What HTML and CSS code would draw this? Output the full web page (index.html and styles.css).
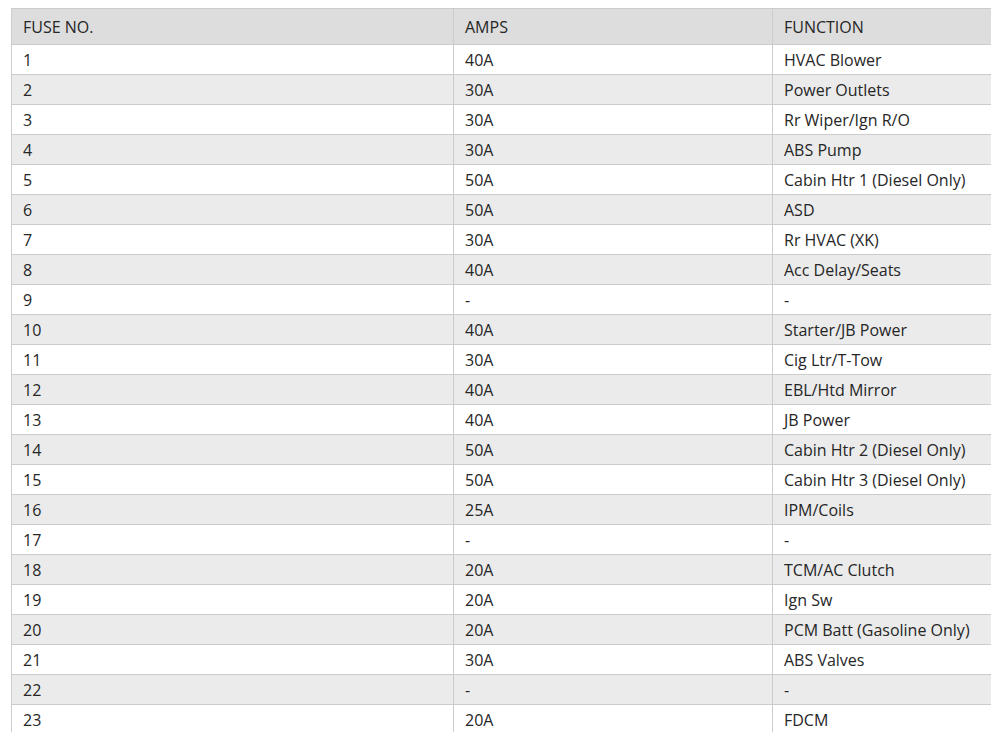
FILE: index.html
```html
<!DOCTYPE html>
<html>
<head>
<meta charset="utf-8">
<link rel="stylesheet" href="styles.css">
</head>
<body>
<div class="page">
<table class="fuses">
<colgroup><col class="c1"><col class="c2"><col class="c3"></colgroup>
<thead>
<tr><th>FUSE NO.</th><th>AMPS</th><th>FUNCTION</th></tr>
</thead>
<tbody>
<tr><td>1</td><td>40A</td><td>HVAC Blower</td></tr>
<tr><td>2</td><td>30A</td><td>Power Outlets</td></tr>
<tr><td>3</td><td>30A</td><td>Rr Wiper/Ign R/O</td></tr>
<tr><td>4</td><td>30A</td><td>ABS Pump</td></tr>
<tr><td>5</td><td>50A</td><td>Cabin Htr 1 (Diesel Only)</td></tr>
<tr><td>6</td><td>50A</td><td>ASD</td></tr>
<tr><td>7</td><td>30A</td><td>Rr HVAC (XK)</td></tr>
<tr><td>8</td><td>40A</td><td>Acc Delay/Seats</td></tr>
<tr><td>9</td><td>-</td><td>-</td></tr>
<tr><td>10</td><td>40A</td><td>Starter/JB Power</td></tr>
<tr><td>11</td><td>30A</td><td>Cig Ltr/T-Tow</td></tr>
<tr><td>12</td><td>40A</td><td>EBL/Htd Mirror</td></tr>
<tr><td>13</td><td>40A</td><td>JB Power</td></tr>
<tr><td>14</td><td>50A</td><td>Cabin Htr 2 (Diesel Only)</td></tr>
<tr><td>15</td><td>50A</td><td>Cabin Htr 3 (Diesel Only)</td></tr>
<tr><td>16</td><td>25A</td><td>IPM/Coils</td></tr>
<tr><td>17</td><td>-</td><td>-</td></tr>
<tr><td>18</td><td>20A</td><td>TCM/AC Clutch</td></tr>
<tr><td>19</td><td>20A</td><td>Ign Sw</td></tr>
<tr><td>20</td><td>20A</td><td>PCM Batt (Gasoline Only)</td></tr>
<tr><td>21</td><td>30A</td><td>ABS Valves</td></tr>
<tr><td>22</td><td>-</td><td>-</td></tr>
<tr><td>23</td><td>20A</td><td>FDCM</td></tr>
</tbody>
</table>
</div>
</body>
</html>
```
FILE: styles.css
```css
html, body {
  margin: 0;
  padding: 0;
  background: #ffffff;
}
.page {
  box-sizing: border-box;
  width: 991px;
  height: 732px;
  padding: 8px 0 0 11px;
  overflow: hidden;
}
.fuses {
  border-collapse: collapse;
  table-layout: fixed;
  width: 1121px;
  font-family: "Open Sans", "Liberation Sans", sans-serif;
  font-size: 16px;
  color: #262626;
}
.c1 { width: 442px; }
.c2 { width: 319px; }
.c3 { width: 360px; }
.fuses th,
.fuses td {
  border: 1px solid #cccccc;
  text-align: left;
  padding: 0 0 0 11px;
  white-space: nowrap;
  font-weight: 400;
}
.fuses th {
  height: 35px;
  background: #dddddd;
}
.fuses td {
  height: 29px;
}
.fuses tbody tr:nth-child(even) td {
  background: #ebebeb;
}
```
